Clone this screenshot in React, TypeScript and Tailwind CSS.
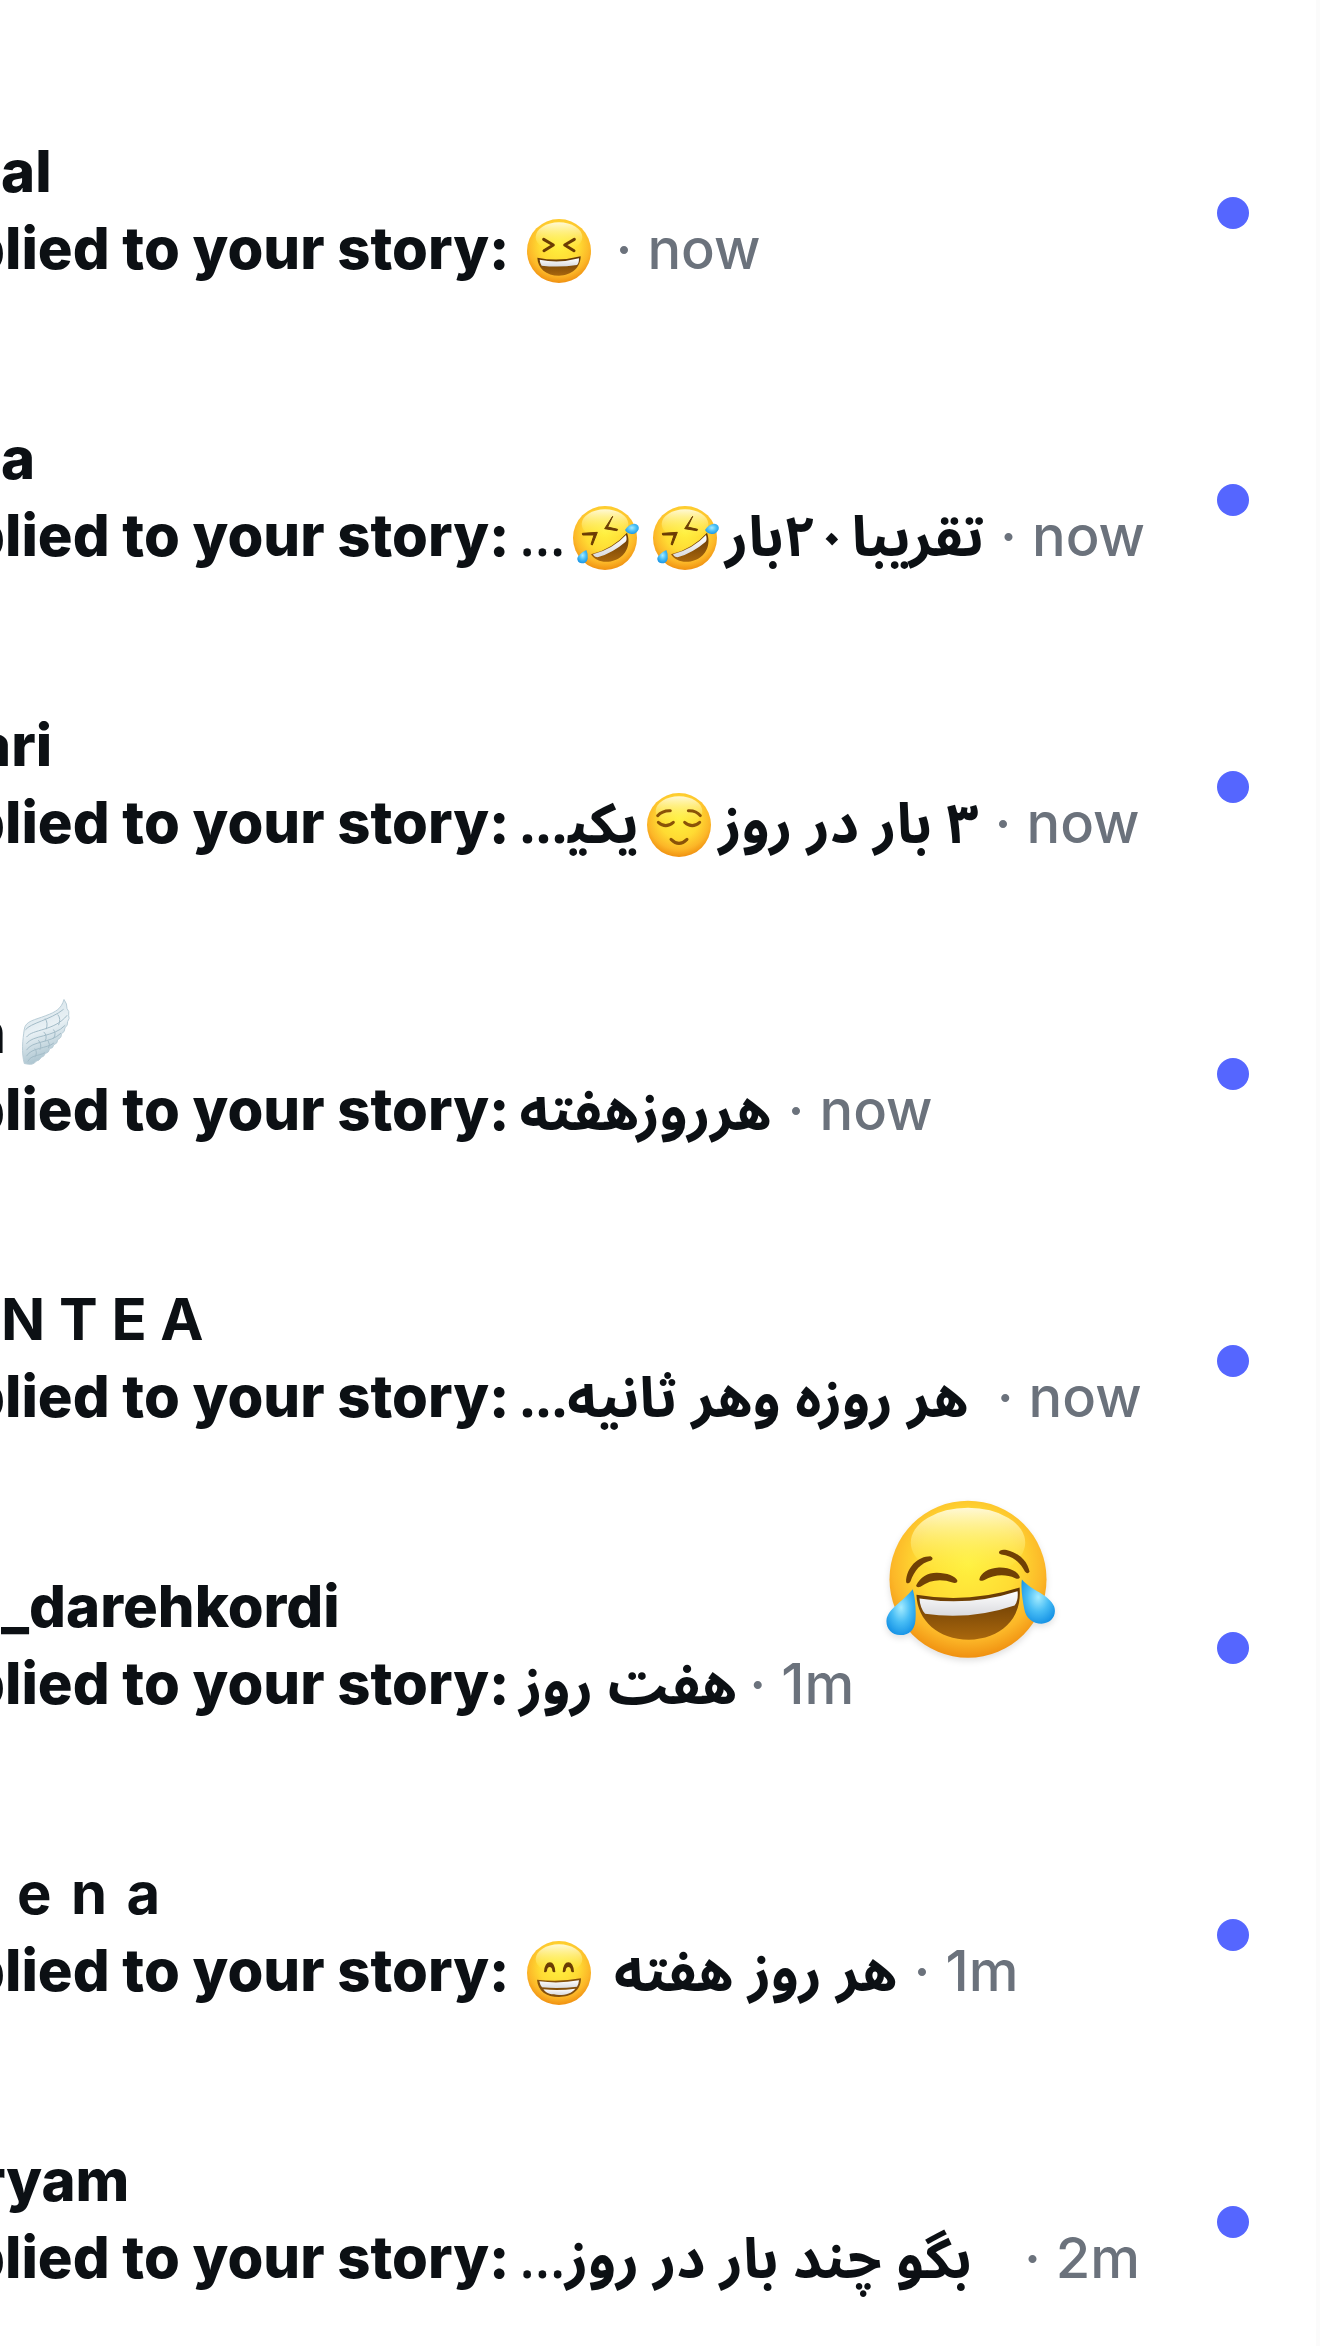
import React from "react";
import type { ReactNode } from "react";

const BROWN = "#6b3d04";

function Gradients() {
  return (
    <svg className="absolute size-0" aria-hidden="true">
      <defs>
        <radialGradient id="face" cx="0.5" cy="0.4" r="0.62">
          <stop offset="0" stopColor="#fff13f" />
          <stop offset="0.5" stopColor="#ffdb33" />
          <stop offset="0.78" stopColor="#fcb728" />
          <stop offset="1" stopColor="#ee8a0d" />
        </radialGradient>
        <linearGradient id="shine" x1="0" y1="0" x2="0" y2="1">
          <stop offset="0" stopColor="#fffbe0" stopOpacity="0.95" />
          <stop offset="1" stopColor="#fff13f" stopOpacity="0" />
        </linearGradient>
        <linearGradient id="mouth" x1="0" y1="0" x2="0" y2="1">
          <stop offset="0" stopColor="#5f3503" />
          <stop offset="1" stopColor="#a9670d" />
        </linearGradient>
        <linearGradient id="teeth" x1="0" y1="0" x2="0" y2="1">
          <stop offset="0" stopColor="#ffffff" />
          <stop offset="1" stopColor="#d9dade" />
        </linearGradient>
        <radialGradient id="tear" cx="0.5" cy="0.4" r="0.65">
          <stop offset="0" stopColor="#a5ecff" />
          <stop offset="0.5" stopColor="#48bdf5" />
          <stop offset="1" stopColor="#128fe4" />
        </radialGradient>
        <linearGradient id="feather" x1="0.3" y1="0" x2="0.6" y2="1">
          <stop offset="0" stopColor="#d3e1e8" />
          <stop offset="0.45" stopColor="#e9f1f5" />
          <stop offset="1" stopColor="#9dbac7" />
        </linearGradient>
      </defs>
    </svg>
  );
}

function Emoji({ label, children }: { label: string; children: ReactNode }) {
  return (
    <svg role="img" aria-label={label} viewBox="-120 -120 240 240" className="inline-block size-20 align-[-22px]">
      <circle r="96" fill="url(#face)" />
      <ellipse cy="-42" rx="70" ry="44" fill="url(#shine)" />
      {children}
    </svg>
  );
}

function Laughing() {
  return (
    <Emoji label="laughing">
      <g fill="none" stroke={BROWN} strokeWidth="9" strokeLinecap="round" strokeLinejoin="round">
        <path d="M-46-35L-17-18L-45-1" />
        <path d="M46-35L17-18L45-1" />
      </g>
      <path d="M-65 20Q0 33 65 16C65 49 39 74 0 74C-39 74-64 51-65 20Z" fill="url(#mouth)" />
      <path d="M-58 26Q0 38 60 22Q60 38 54 42Q0 50-52 44Q-57 38-58 26Z" fill="url(#teeth)" />
    </Emoji>
  );
}

function Rolling() {
  return (
    <Emoji label="rolling on the floor laughing">
      <g fill={BROWN} stroke={BROWN} strokeWidth="3" strokeLinejoin="round">
        <path d="M23-65L8-33L38-26L36-22L-1-28Z" />
        <path d="M-68-14L-23-17L-38 21L-42 19L-33-9L-67-9Z" />
      </g>
      <path d="M-42 49Q24 32 66-16C79 20 63 53 31 66C2 78-29 70-42 49Z" fill="url(#mouth)" />
      <path d="M-36 49Q24 33 63-9Q67 5 62 11Q24 44-22 58Q-32 58-36 49Z" fill="url(#teeth)" />
      <path d="M60-24Q72-43 89-43Q104-39 101-26Q94-10 79-12Q66-14 60-24Z" fill="url(#tear)" />
      <path d="M-56 36Q-77 46-83 60Q-84 74-70 76Q-55 76-52 62Q-50 49-56 36Z" fill="url(#tear)" />
    </Emoji>
  );
}

function Relieved() {
  return (
    <Emoji label="relieved">
      <g fill="none" stroke="#8a5208" strokeWidth="9" strokeLinecap="round">
        <path d="M-64-28Q-50-44-26-43" />
        <path d="M28-43Q52-44 64-28" />
        <path d="M-62-8Q-40 12-17-8" />
        <path d="M17-8Q40 12 62-8" />
        <path d="M-24 43Q0 67 24 43" />
      </g>
    </Emoji>
  );
}

function Beaming() {
  return (
    <Emoji label="beaming">
      <g fill={BROWN}>
        <path d="M-45-3Q-43-32-27-32Q-13-32-11-3Q-19-1-20-7Q-21-18-28-18Q-35-18-36-7Q-38-1-45-3Z" />
        <path d="M11-3Q13-32 28-32Q43-32 45-3Q37-1 36-7Q35-18 28-18Q21-18 20-7Q18-1 11-3Z" />
      </g>
      <path d="M-66 20Q0 28 66 16C66 52 38 72 0 72C-38 72-63 54-66 20Z" fill="#84500c" />
      <path d="M-59 25Q0 33 60 22Q59 34 54 41Q0 48-51 43Q-57 36-59 25Z" fill="url(#teeth)" />
      <path d="M-47 49Q0 54 49 47C39 60 22 66 0 66C-22 66-38 62-47 49Z" fill="url(#teeth)" />
    </Emoji>
  );
}

function Wing() {
  return (
    <svg role="img" aria-label="wing" viewBox="60 20 165 215" className="-my-4 inline-block h-[72px] w-[55px] align-[1px]">
      <path
        d="M76 222C67 190 71 150 76 119C79 94 109 91 139 79C172 67 187 57 195 30Q205 43 204 57Q212 65 209 78Q213 87 206 96Q207 108 198 115Q198 128 187 133Q188 146 176 150Q176 163 164 166Q163 177 152 177Q150 190 139 192Q134 203 127 203Q121 214 111 215Q104 229 76 222Z"
        fill="url(#feather)"
        stroke="#b9cdd7"
        strokeWidth="3"
      />
      <g fill="none" stroke="#a3bcc8" strokeWidth="3" strokeLinecap="round">
        <path d="M80 120C95 100 153 92 193 60" />
        <path d="M139 88Q148 100 142 118" />
        <path d="M177 76Q187 88 179 106" />
        <path d="M83 142C100 118 165 126 204 78" />
        <path d="M83 162C100 136 164 144 198 108" />
        <path d="M83 181C100 153 154 162 185 132" />
        <path d="M83 199C98 173 144 178 164 161" />
        <path d="M87 215C96 196 119 200 137 190" />
        <path d="M135 128Q146 138 139 154M164 121Q173 132 164 146M119 153Q130 166 123 180M148 155Q155 165 149 175M108 178Q117 190 108 202" />
      </g>
    </svg>
  );
}

function TearsOfJoy() {
  return (
    <svg
      role="img"
      aria-label="tears of joy"
      viewBox="60 50 540 520"
      className="absolute -top-20 left-[880px] h-[173px] w-[180px] drop-shadow-md"
    >
      <circle cx="324" cy="300" r="236" fill="url(#face)" />
      <ellipse cx="324" cy="190" rx="172" ry="105" fill="url(#shine)" />
      <g fill="#704005">
        <path d="M138 309C139 264 174 231 211 231Q223 237 213 244C181 252 163 274 151 307Q144 317 138 309Z" />
        <path d="M417 220C418 210 433 209 450 215C484 226 505 251 509 278Q503 287 495 277C480 248 459 231 424 226Q417 225 417 220Z" />
        <path d="M168 319C181 294 202 281 230 281C261 281 287 292 292 304Q293 313 280 311C242 298 211 302 181 323Q169 327 168 319Z" />
        <path d="M358 301C362 281 385 267 417 265C450 264 475 278 480 294Q477 302 466 297C435 284 404 286 372 303Q359 308 358 301Z" />
      </g>
      <path d="M169 347Q325 374 479 325C488 421 421 480 326 482C235 482 172 425 169 347Z" fill="url(#mouth)" />
      <path d="M178 358Q330 382 473 336Q476 364 464 379Q330 424 195 404Q180 387 178 358Z" fill="url(#teeth)" />
      <path d="M158 330C166 357 168 393 166 424C163 457 142 469 120 468C94 467 77 448 79 423C82 389 128 368 158 330Z" fill="url(#tear)" />
      <path d="M486 301C514 334 568 346 583 382C592 410 573 433 545 434C519 434 498 418 493 389C488 362 482 330 486 301Z" fill="url(#tear)" />
    </svg>
  );
}

type Thread = {
  id: string;
  name: ReactNode;
  nameClass: string;
  message: ReactNode;
  time: string;
  gap: string;
  overlay?: ReactNode;
};

const threads: Thread[] = [
  { id: "al", name: "al", nameClass: "font-extrabold", message: <Laughing />, time: "now", gap: "ml-4" },
  {
    id: "a",
    name: "a",
    nameClass: "font-extrabold",
    message: (
      <>
        {"تقریبا\u200a۲۰بار"}
        <Rolling />
        <Rolling />
        <span className="font-medium">...</span>
      </>
    ),
    time: "now",
    gap: "ml-4",
  },
  {
    id: "ari",
    name: "ari",
    nameClass: "-ml-6 font-extrabold",
    message: (
      <>
        ۳ بار در روز
        <Relieved />
        {"یکی\u200d..."}
      </>
    ),
    time: "now",
    gap: "ml-4",
  },
  {
    id: "n",
    name: (
      <>
        n <Wing />
      </>
    ),
    nameClass: "-ml-8 font-extrabold",
    message: "هرروزهفته",
    time: "now",
    gap: "ml-4",
  },
  { id: "ntea", name: "N T E A", nameClass: "font-bold", message: "هر روزه وهر ثانیه...", time: "now", gap: "ml-7" },
  {
    id: "darehkordi",
    name: "_darehkordi",
    nameClass: "font-extrabold",
    message: "هفت روز",
    time: "1m",
    gap: "ml-3",
    overlay: <TearsOfJoy />,
  },
  {
    id: "ena",
    name: "e\u2004n\u2004a",
    nameClass: "ml-4 font-bold",
    message: (
      <>
        هر روز هفته <Beaming />
      </>
    ),
    time: "1m",
    gap: "ml-4",
  },
  {
    id: "ryam",
    name: "ryam",
    nameClass: "-ml-5 font-extrabold",
    message: (
      <>
        بگو چند بار در روز<span className="font-medium">...</span>
      </>
    ),
    time: "2m",
    gap: "ml-13",
  },
];

export default function App() {
  return (
    <main className="min-h-screen overflow-hidden border-r-4 border-[#fbfbfb] bg-white pt-[141px] font-['Inter','Liberation_Sans',sans-serif] text-[58px] whitespace-nowrap text-[#0c1014]">
      <Gradients />
      <ul>
        {threads.map((t) => (
          <li key={t.id} className="relative flex h-[287px] items-start justify-between">
            <div className="min-w-0">
              <h2 className={`h-[61px] pl-px leading-[61px] ${t.nameClass}`}>{t.name}</h2>
              <p className="-ml-8 flex h-[92px] items-baseline leading-[92px]">
                <span className="font-extrabold">plied to your story:</span>
                <bdi dir="rtl" className="ml-[10px] font-['Noto_Sans_Arabic','Vazirmatn','DejaVu_Sans_Condensed',sans-serif] text-[56px] font-bold">
                  {t.message}
                </bdi>
                <span className={`text-[56px] font-medium text-[#6b727c] ${t.gap}`}>· {t.time}</span>
              </p>
            </div>
            <span role="status" aria-label="Unread" className="mt-14 mr-[67px] size-8 shrink-0 rounded-full bg-[#5566ff]" />
            {t.overlay}
          </li>
        ))}
      </ul>
    </main>
  );
}
